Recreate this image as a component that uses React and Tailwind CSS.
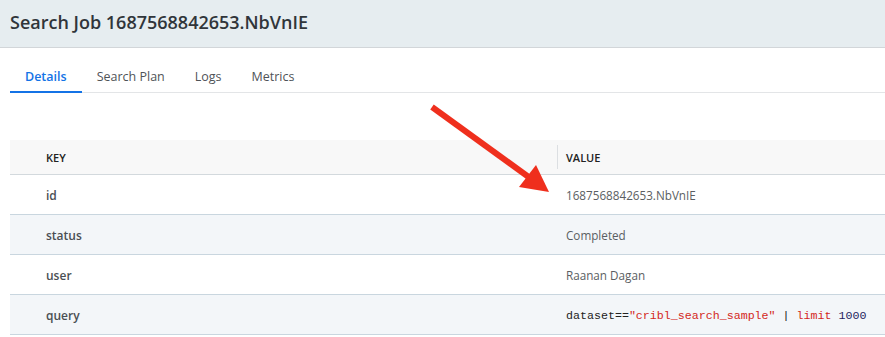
import React from 'react';

const ROWS = [
  { key: 'id', value: '1687568842653.NbVnIE' },
  { key: 'status', value: 'Completed' },
  { key: 'user', value: 'Raanan Dagan' },
  { key: 'query', value: null },
];

const TABS = ['Details', 'Search Plan', 'Logs', 'Metrics'];

const QueryValue = () => (
  <span className="text-[11.65px] text-[#222]" style={{ fontFamily: '"Liberation Mono", "DejaVu Sans Mono", monospace' }}>
    dataset==<span className="text-[#d3281c]">"cribl_search_sample"</span> | <span className="text-[#d3281c]">limit</span> <span className="text-[#23235e]">1000</span>
  </span>
);

const App = () => {
  return (
    <div className="relative h-[337px] w-[885px] overflow-hidden bg-white" style={{ fontFamily: '"Open Sans", "Noto Sans", sans-serif' }}>
      {/* Title bar */}
      <div className="flex h-[48px] items-center border-b border-[#d2d6d9] bg-[#e6edf0] px-[10px] pb-[2px]">
        <h1 className="text-[18px] font-semibold text-[#30353a]">Search Job 1687568842653.NbVnIE</h1>
      </div>

      {/* Tabs */}
      <div className="ml-[10px] flex h-[45px] border-b border-[#e3e5e7]">
        {TABS.map((t, i) => (
          <div
            key={t}
            className={`-mb-px flex items-center border-b-2 px-[15px] pt-[16px] text-[12.5px] ${
              i === 0 ? 'border-[#1473e6] font-semibold text-[#1473e6]' : 'border-transparent text-[#4f5357]'
            }`}
          >
            {t}
          </div>
        ))}
      </div>

      {/* Table */}
      <div className="ml-[10px] mt-[47px]">
        <div className="flex h-[35px] border-b border-[#d3d9dd] bg-[#f8f8f8] text-[11px] font-semibold text-[#222]">
          <div className="flex w-[547px] items-center pl-[36px] pt-[3px]">KEY</div>
          <div className="flex flex-1 items-center">
            <span className="h-[24px] w-px bg-[#dcdfe2]" />
            <span className="ml-[8px] pt-[3px]">VALUE</span>
          </div>
        </div>
        {ROWS.map((r, i) => (
          <div
            key={r.key}
            className={`flex h-[40px] border-b border-[#c9d6df] ${i % 2 === 1 ? 'bg-[#f3f6f9]' : 'bg-white'}`}
          >
            <div className="flex w-[547px] items-center pl-[36px] pt-[2px] text-[12px] font-semibold text-[#4a4f54]">{r.key}</div>
            <div className="flex flex-1 items-center pl-[9px] pt-[2px] text-[11.7px] text-[#5a5e62]">
              {r.value ?? <QueryValue />}
            </div>
          </div>
        ))}
      </div>

      {/* Annotation arrow */}
      <svg className="pointer-events-none absolute left-0 top-0" width="885" height="337">
        <line x1="432" y1="107" x2="530" y2="178" stroke="#ef2f1d" strokeWidth="6" />
        <polygon points="549,192 519,187 536,165" fill="#ef2f1d" />
      </svg>
    </div>
  );
};

export default App;
